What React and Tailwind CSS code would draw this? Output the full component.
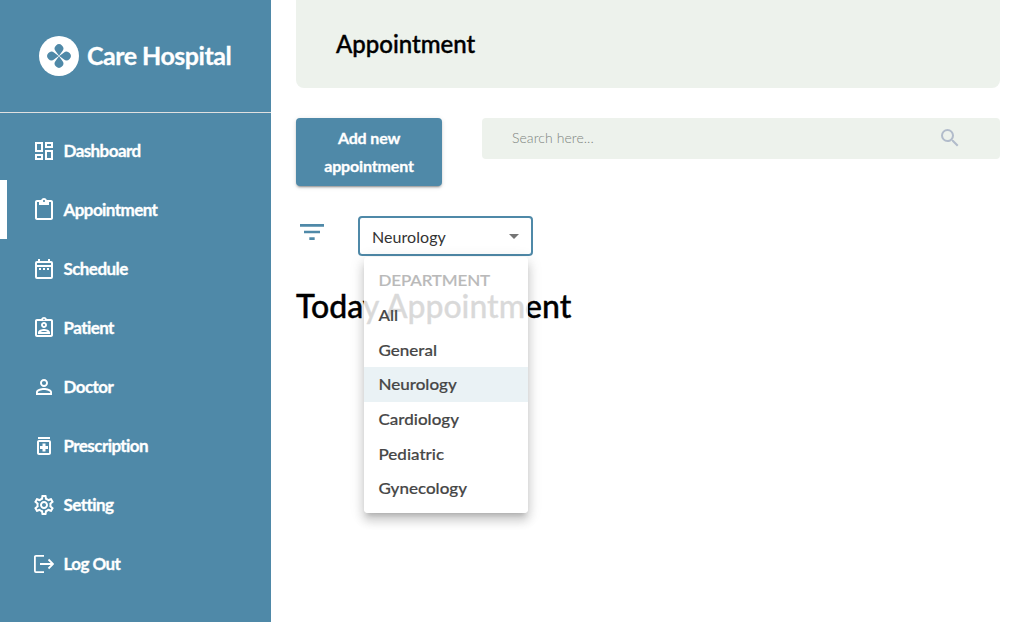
import { MdOutlineDashboard, MdContentPaste, MdOutlineAssignmentInd, MdPersonOutline, MdOutlineMedication, MdOutlineSettings, MdSearch, MdFilterList, MdArrowDropDown } from "react-icons/md";

function Logo() {
  return (
    <svg viewBox="0 0 40 40" className="size-10 shrink-0">
      <circle cx="20" cy="20" r="20" fill="#fff" />
      <g fill="#4f89a8">
        {[0, 90, 180, 270].map((a) => (
          <path key={a} transform={`rotate(${a} 20 20)`} d="M20 19.700L16.700 15.300A4.300 4.300 0 1 1 23.300 15.300Z" />
        ))}
      </g>
    </svg>
  );
}

function CalendarIcon({ className }) {
  return (
    <svg viewBox="0 0 24 24" className={className} fill="currentColor">
      <path fillRule="evenodd" d="M6 2h2v2h8V2h2v2h1a2 2 0 0 1 2 2v14a2 2 0 0 1-2 2H5a2 2 0 0 1-2-2V6a2 2 0 0 1 2-2h1ZM5 6v2h14V6ZM5 10v10h14V10Z" />
      <path d="M7 11h2v2H7ZM11 11h2v2h-2ZM15 11h2v2h-2Z" />
    </svg>
  );
}

function LogoutIcon() {
  return (
    <svg viewBox="0 0 20 20" className="size-5" fill="none" stroke="currentColor" strokeWidth="1.800">
      <path d="M10 1.900H1.900a1 1 0 0 0-1 1v14.200a1 1 0 0 0 1 1H10M6 10h12.500M14.500 5.500 19 10l-4.500 4.500" />
    </svg>
  );
}

const nav = [
  ["Dashboard", MdOutlineDashboard],
  ["Appointment", MdContentPaste],
  ["Schedule", CalendarIcon],
  ["Patient", MdOutlineAssignmentInd],
  ["Doctor", MdPersonOutline],
  ["Prescription", MdOutlineMedication],
  ["Setting", MdOutlineSettings],
  ["Log Out", LogoutIcon],
];

const departments = ["All", "General", "Neurology", "Cardiology", "Pediatric", "Gynecology"];

export default function App() {
  return (
    <div className="flex h-[622px] w-[1024px] overflow-hidden bg-white font-['Lato',sans-serif] text-black">
      <aside className="w-[271px] shrink-0 bg-[#4f89a8] text-white">
        <div className="flex h-[113px] items-center gap-2 border-b border-[#e0e0e0] pl-[39px]">
          <Logo />
          <span className="text-[25px] font-bold tracking-[-0.5px] [-webkit-text-stroke:0.3px_currentColor]">Care Hospital</span>
        </div>
        <nav className="pt-2">
          {nav.map(([label, Icon]) => (
            <div key={label} className={`flex h-[59px] items-center gap-[7.5px] ${label === "Appointment" ? "border-l-7 border-white pl-[25px]" : "pl-8"}`}>
              <span className="flex size-6 items-center justify-center">
                <Icon className={label === "Log Out" ? "size-5" : "size-6"} />
              </span>
              <span className="pt-px text-[17px] font-bold tracking-[-0.57px] [-webkit-text-stroke:0.3px_currentColor]">{label}</span>
            </div>
          ))}
        </nav>
      </aside>
      <main className="flex-1 pr-6 pl-[25px]">
        <header className="flex h-[88px] items-center rounded-b-lg bg-[#edf2ec] pl-10">
          <h1 className="text-2xl font-medium [-webkit-text-stroke:0.4px_currentColor]">Appointment</h1>
        </header>
        <div className="mt-[30px] flex items-start gap-10">
          <button className="h-[68px] w-[146px] rounded bg-[#4f89a8] px-4 text-base leading-7 font-bold tracking-[-0.15px] text-white shadow-[0_3px_1px_-2px_rgba(0,0,0,0.2),0_2px_2px_rgba(0,0,0,0.14),0_1px_5px_rgba(0,0,0,0.12)] [-webkit-text-stroke:0.3px_currentColor]">
            Add new appointment
          </button>
          <div className="flex h-[41px] flex-1 items-center justify-between rounded bg-[#edf2ec] pr-[38px] pb-[2px] pl-[30px]">
            <span className="text-sm font-light tracking-[0.07px] text-[#7d8480]">Search here...</span>
            <MdSearch className="size-6 text-[#b2bccb]" />
          </div>
        </div>
        <div className="mt-[30px] flex">
          <MdFilterList className="size-8 text-[#4f89a8]" />
          <div className="relative ml-[30px] flex h-10 w-[175px] items-center justify-between rounded border-2 border-[#4f89a8] pr-[5px] pl-3">
            <span className="pt-0.5 text-base tracking-[0.06px] text-[#333]">Neurology</span>
            <MdArrowDropDown className="size-6 text-[#757575]" />
            <div className="absolute top-[39px] left-[3.5px] h-[256px] w-[164.5px] rounded bg-white/85 pt-[6.5px] shadow-[0_5px_5px_-3px_rgba(0,0,0,0.17),0_8px_10px_1px_rgba(0,0,0,0.12),0_3px_14px_2px_rgba(0,0,0,0.1)]">
              <div className="flex h-[34.6px] items-center pl-[15px] text-[17px] font-medium tracking-[-0.15px] text-[#b9b9b9]"><span className="-mt-0.5 inline-block scale-y-[0.94] [-webkit-text-stroke:0.2px_currentColor]">DEPARTMENT</span></div>
              {departments.map((d) => (
                <div key={d} className={`flex h-[34.6px] items-center pl-[15px] text-[17px] font-medium text-[#464646] ${d === "Neurology" ? "bg-[#eaf2f5]" : ""}`}><span className="-mt-px inline-block scale-y-[0.94] [-webkit-text-stroke:0.2px_currentColor]">{d}</span></div>
              ))}
            </div>
          </div>
        </div>
        <h2 className="mt-[26px] text-[32px] leading-[48px] font-medium [-webkit-text-stroke:0.4px_currentColor]">Today Appointment</h2>
      </main>
    </div>
  );
}
